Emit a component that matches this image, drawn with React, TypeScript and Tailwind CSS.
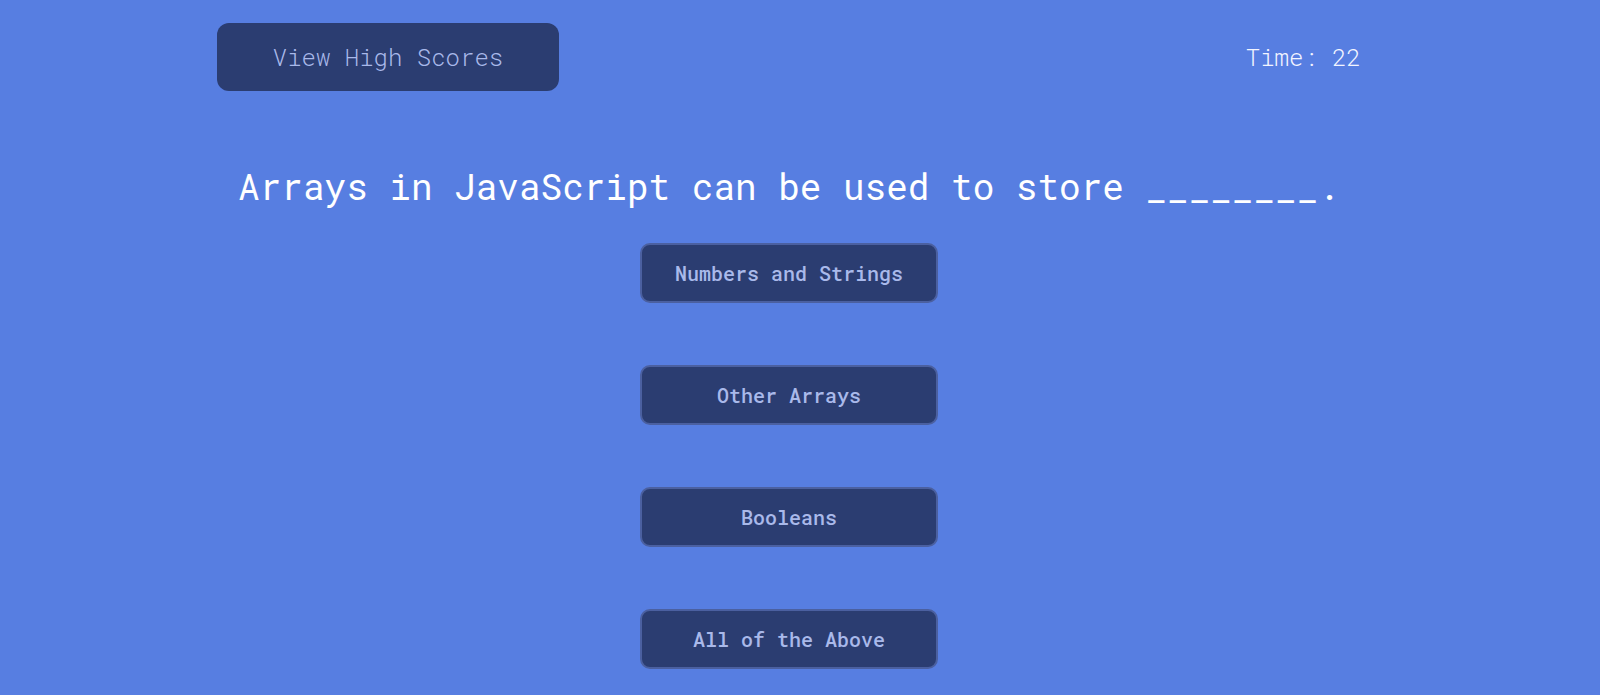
const ANSWERS = ['Numbers and Strings', 'Other Arrays', 'Booleans', 'All of the Above'];

export default function App() {
  return (
    <div
      className="min-h-[695px] w-full bg-[#577ee1] pl-[217px] pr-[239px] pt-[23px]"
      style={{ fontFamily: '"Roboto Mono", "DejaVu Sans Mono", monospace' }}
    >
      {/* header */}
      <div className="flex items-center justify-between">
        <button className="h-[68px] w-[342px] rounded-[12px] bg-[#2b3d71] text-[24px] font-light text-[#a9b9ea]">
          View High Scores
        </button>
        <span className="text-[24px] font-light text-[#f3f5ff]">Time: 22</span>
      </div>

      {/* question */}
      <h1 className="mt-[68px] text-center text-[36px] leading-[54px] text-white">
        Arrays in JavaScript can be used to store ________.
      </h1>

      <div className="mt-[30px] flex flex-col items-center gap-[62px]">
        {ANSWERS.map((a) => (
          <button
            key={a}
            className="h-[60px] w-[298px] rounded-[10px] border-2 border-[#4b60a0] bg-[#2b3d71] text-[20px] font-medium text-[#a9b9ea]"
          >
            {a}
          </button>
        ))}
      </div>
    </div>
  );
}
